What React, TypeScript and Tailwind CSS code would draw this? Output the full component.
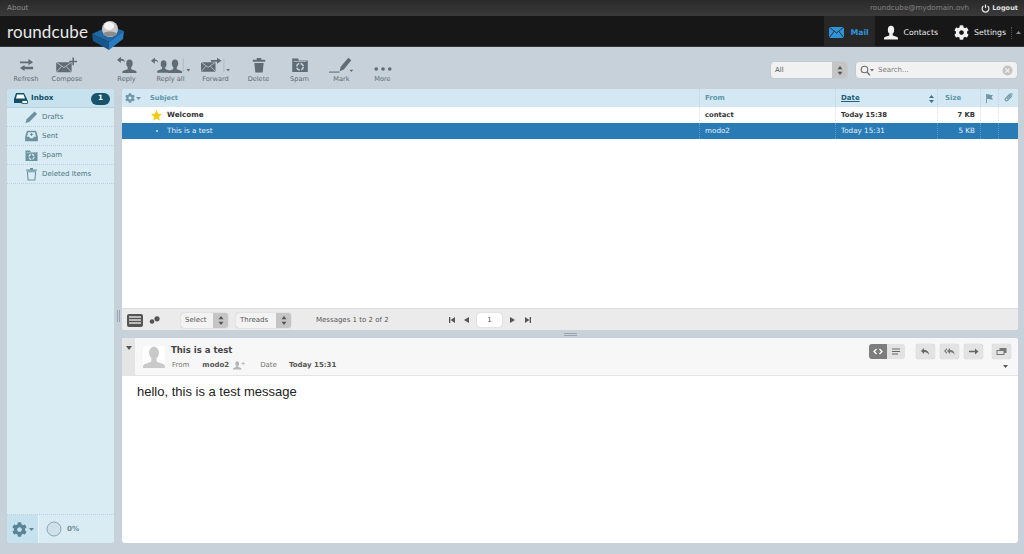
import { FaCog } from 'react-icons/fa';

const toolIcon = '#5f6c75';

function Person({ x = 0, y = 0, s = 1, fill = toolIcon }: { x?: number; y?: number; s?: number; fill?: string }) {
  return (
    <g transform={`translate(${x} ${y}) scale(${s})`} fill={fill}>
      <ellipse cx="8" cy="5" rx="3.6" ry="4.6" />
      <path d="M6 9h4v2.4l5 1.8c.8.3 1 1 1 2.8H0c0-1.8.2-2.500 1-2.800l5-1.800z" />
    </g>
  );
}

function Envelope({ x = 0, y = 0, w = 20, fill = toolIcon }: { x?: number; y?: number; w?: number; fill?: string }) {
  const s = w / 20;
  return (
    <g transform={`translate(${x} ${y}) scale(${s})`}>
      <rect width="20" height="13" fill={fill} rx="0.5" />
      <path d="M0 0l10 7 10-7M0 13l7-7.5M20 13l-7-7.5" fill="none" stroke="#c7d1da" strokeWidth="1" />
    </g>
  );
}

function RecycleFolder({ color = toolIcon, bg = '#c7d1da' }: { color?: string; bg?: string }) {
  return (
    <>
      <path d="M2 3h6l1 2h9v12H2z" fill={color} />
      <path d="M3.5 6h13" stroke={bg} strokeWidth="0.8" />
      <circle cx="10" cy="11.500" r="3.400" fill="none" stroke={bg} strokeWidth="1.600" strokeDasharray="4 1.400" />
    </>
  );
}

function ToolButton({ label, width, vw, children }: { label: string; width: string; vw: number; children: React.ReactNode }) {
  return (
    <div className={`${width} flex flex-col items-center`}>
      <svg width={Math.round(vw * 0.77)} height="17" viewBox={`0 0 ${vw} 22`}>{children}</svg>
      <span className="mt-[1px] text-[6.6px] leading-[10px] text-[#5c6b74]">{label}</span>
    </div>
  );
}

function Caret({ x, y, color = toolIcon }: { x: number; y: number; color?: string }) {
  return <path d={`M${x} ${y}h5l-2.5 3z`} fill={color} />;
}

function Toolbar() {
  return (
    <div className="flex h-[42px] items-start pl-[6px] pr-[7px] pt-[9px]">
      <ToolButton label="Refresh" width="w-[40px]" vw={19}>
        <path d="M1 8h11V5l6 4-6 4v-2.500H1zM18 15H7v-2.500l-6 4 6 4V18h11z" fill={toolIcon} transform="translate(0 -1)" />
      </ToolButton>
      <ToolButton label="Compose" width="w-[42px]" vw={28}>
        <Envelope x={0} y={8} />
        <path d="M21 2h2v4h4v2h-4v4h-2V8h-4V6h4z" fill={toolIcon} />
      </ToolButton>
      <div className="w-[18px]" />
      <ToolButton label="Reply" width="w-[41px]" vw={26}>
        <Person x={7} y={4} s={1.15} />
        <path d="M0 5l5-4v2.600c3 0 5 1.500 5.500 4.400-1.500-1.500-3-2-5.500-2V9z" fill={toolIcon} />
      </ToolButton>
      <ToolButton label="Reply all" width="w-[47px]" vw={52}>
        <Person x={8} y={5} s={1.05} />
        <Person x={22} y={4} s={1.15} />
        <path d="M0 6l5-4v2.600c2.500 0 4 1.500 4.500 4-1.500-1.500-2.500-2-4.500-2V10z" fill={toolIcon} />
        <path d="M42 3v18" stroke="#9aa5ad" strokeWidth="0.7" />
        <Caret x={46} y={17} />
      </ToolButton>
      <ToolButton label="Forward" width="w-[43px]" vw={38}>
        <Envelope x={0} y={8} w={19} />
        <path d="M13 5h8V2l6 4-6 4V7.500h-8z" fill={toolIcon} />
        <path d="M30 3v18" stroke="#9aa5ad" strokeWidth="0.7" />
        <Caret x={33} y={17} />
      </ToolButton>
      <ToolButton label="Delete" width="w-[43px]" vw={18}>
        <path d="M1 5h16v2.500H1zM6 2.500h6V5H6z" fill={toolIcon} />
        <path d="M3 9h12l-1.200 12.500H4.200z" fill={toolIcon} />
      </ToolButton>
      <ToolButton label="Spam" width="w-[39px]" vw={24}>
        <g transform="translate(-1 -1) scale(1.3)"><RecycleFolder /></g>
      </ToolButton>
      <ToolButton label="Mark" width="w-[45px]" vw={33}>
        <path d="M0 21h14" stroke={toolIcon} strokeWidth="1.400" />
        <path d="M14 20l1.500-6 10-12 4 3.500-10 12z" fill={toolIcon} />
        <Caret x={27} y={18} />
      </ToolButton>
      <ToolButton label="More" width="w-[37px]" vw={24}>
        <circle cx="3" cy="17" r="2.400" fill={toolIcon} />
        <circle cx="12" cy="17" r="2.400" fill={toolIcon} />
        <circle cx="21" cy="17" r="2.400" fill={toolIcon} />
      </ToolButton>
      <div className="flex-1" />
      <div className="mt-[6px] flex h-[16px] w-[76px] rounded-[3px] bg-[#f1f1f1] shadow-[0_0_1px_#9aa5ad]">
        <span className="flex-1 pl-[4px] text-[7px] leading-[16px] text-[#555]">All</span>
        <div className="flex w-[15px] items-center justify-center rounded-r-[3px] bg-[#c5c5c5]">
          <svg width="6" height="9" viewBox="0 0 6 9"><path d="M3 0l2.500 3.200h-5zM3 9L.5 5.800h5z" fill="#555" /></svg>
        </div>
      </div>
      <div className="ml-[9px] mt-[6px] flex h-[16px] w-[161px] items-center rounded-[3px] bg-[#f1f1f1] px-[4px] shadow-[0_0_1px_#9aa5ad]">
        <svg width="14" height="11" viewBox="0 0 14 11">
          <circle cx="4.500" cy="4.500" r="3.300" fill="none" stroke="#6d6d6d" strokeWidth="1.100" />
          <path d="M7 7l3 3.400" stroke="#6d6d6d" strokeWidth="1.400" />
          <path d="M10 4h4l-2 2.500z" fill="#6d6d6d" />
        </svg>
        <span className="ml-[4px] flex-1 text-[7px] text-[#7b7b7b]">Search...</span>
        <svg width="11" height="11" viewBox="0 0 11 11">
          <circle cx="5.500" cy="5.500" r="5" fill="#c4c4c4" />
          <path d="M3.400 3.400l4.200 4.200M7.600 3.400L3.400 7.600" stroke="#f1f1f1" strokeWidth="1.200" />
        </svg>
      </div>
    </div>
  );
}

function Header() {
  return (
    <>
      <div className="flex h-[16px] items-center justify-between bg-gradient-to-b from-[#2a2a2a] to-[#3a3a3a] pl-[7px] pr-[6px] pt-[1px] text-[7.2px]">
        <span className="text-[#8d8d8d]">About</span>
        <div className="flex items-center">
          <span className="text-[#848484]">roundcube@mydomain.ovh</span>
          <svg className="ml-[12px]" width="9" height="9" viewBox="0 0 9 9" fill="none" stroke="#e6e6e6" strokeWidth="1.200">
            <path d="M2.400 2a3.400 3.400 0 1 0 4.200 0M4.500 .5v3.600" />
          </svg>
          <span className="ml-[2px] text-[6.6px] font-bold text-[#e0e0e0]">Logout</span>
        </div>
      </div>
      <div className="flex h-[31px] items-center justify-between border-b border-[#333] bg-[#171717]">
        <div className="flex items-center pl-[7px]">
          <span className="font-['Lato',sans-serif] text-[17px] leading-[31px] tracking-[0.1px] text-[#e8e8e8]">roundcube</span>
          <svg className="ml-[3px] mt-[4px] -mb-[3px] overflow-visible" width="34" height="31" viewBox="0 0 34 31">
            <path d="M1 15l17-8 15 5-15 11z" fill="#1f6aa6" />
            <path d="M1 15l17 8v8L2 22z" fill="#17558a" />
            <path d="M18 23l15-11-1 8-14 11z" fill="#2a7cc0" />
            <ellipse cx="19" cy="10" rx="8" ry="8" fill="#c9c9c9" />
            <ellipse cx="18" cy="7" rx="5" ry="4" fill="#f4f4f4" />
            <ellipse cx="19" cy="15" rx="7" ry="2.500" fill="#8d8d8d" />
          </svg>
        </div>
        <div className="flex h-full items-center text-[7.8px]">
          <div className="flex h-full w-[51px] items-center justify-center gap-[6px] bg-[#272727] pt-[3px] font-bold text-[#2f93da]">
            <svg width="15" height="11" viewBox="0 0 15 11">
              <rect width="15" height="11" fill="#2f93da" />
              <path d="M0 0l7.500 6L15 0M0 11l5-6.500M15 11l-5-6.500" stroke="#272727" strokeWidth="0.9" fill="none" />
            </svg>
            Mail
          </div>
          <div className="ml-[9px] flex items-center gap-[6px] pt-[3px] text-[#eeeeee]">
            <svg width="14" height="15" viewBox="0 0 16 16"><Person fill="#f2f2f2" /></svg>
            Contacts
          </div>
          <div className="ml-[16px] flex items-center gap-[5px] pt-[3px] text-[#eeeeee]">
            <FaCog className="text-[15px] text-[#f2f2f2]" />
            Settings
          </div>
          <div className="ml-[5px] mt-[3px] h-[12px] border-l border-dotted border-[#555]" />
          <svg className="ml-[4px] mr-[3px] mt-[3px]" width="5" height="3" viewBox="0 0 5 3"><path d="M2.500 0L5 3H0z" fill="#8a8a8a" /></svg>
        </div>
      </div>
    </>
  );
}

const sidebarColor = '#6c929f';

function FolderRow({ label, children }: { label: string; children: React.ReactNode }) {
  return (
    <div className="flex h-[19px] items-center border-b border-dotted border-[#b9d0da] pl-[17px] text-[7px] text-[#4d7683]">
      <svg className="shrink-0" width="15" height="14" viewBox="0 0 20 18">{children}</svg>
      <span className="ml-[3px]">{label}</span>
    </div>
  );
}

function Sidebar() {
  return (
    <div className="flex w-[107px] shrink-0 flex-col overflow-hidden rounded-[3px] bg-[#d9ecf4]">
      <div className="flex h-[19px] items-center border-b border-[#b9d0da] bg-[#c5e2ee] pl-[6px] pr-[4px] pt-[1px] text-[7.2px] font-bold text-[#134f63]">
        <svg width="15" height="13" viewBox="0 0 15 13">
          <path d="M3 1h8l3 6v4H1V7z" fill="#134f63" />
          <path d="M4 2.500h6.500L12 6.500H3z" fill="#fff" />
          <rect x="9" y="8.500" width="5.500" height="3" fill="#fff" stroke="#134f63" strokeWidth="0.8" />
        </svg>
        <span className="ml-[3px] flex-1">Inbox</span>
        <span className="flex h-[12px] w-[19px] items-center justify-center rounded-[6px] bg-[#17536a] text-white">1</span>
      </div>
      <FolderRow label="Drafts">
        <path d="M2 17l1.500-5L14 1.500l3.500 3.500L7 15.500z" fill={sidebarColor} />
      </FolderRow>
      <FolderRow label="Sent">
        <path d="M4 2h12l2.500 8v6H1.500v-6z" fill={sidebarColor} />
        <path d="M5.500 4h9l1.500 6h-3l-1 2H8l-1-2H4z" fill="#d9ecf4" />
        <path d="M10 5v4M8 7h4" stroke={sidebarColor} strokeWidth="1.400" />
      </FolderRow>
      <FolderRow label="Spam">
        <RecycleFolder color={sidebarColor} bg="#d9ecf4" />
      </FolderRow>
      <FolderRow label="Deleted Items">
        <path d="M3 3h14v1.500H3zM8 1h4v2H8z" fill={sidebarColor} />
        <path d="M4.500 6h11l-1 11h-9z" fill="none" stroke={sidebarColor} strokeWidth="1.500" />
      </FolderRow>
      <div className="flex-1" />
      <div className="flex h-[29px] items-center border-t border-dotted border-[#b9d0da]">
        <div className="flex h-full w-[32px] items-center justify-center gap-[2px] border-r border-[#e6f3f8] bg-[#c5e2ee]">
          <FaCog className="text-[15px] text-[#5a8594]" />
          <svg width="5" height="3" viewBox="0 0 5 3"><path d="M0 0h5L2.500 3z" fill="#5a8594" /></svg>
        </div>
        <svg className="ml-[7px] -mt-[1px]" width="16" height="16" viewBox="0 0 16 16">
          <circle cx="8" cy="8" r="7" fill="#d0e2e9" stroke="#7f9fab" strokeWidth="0.9" />
        </svg>
        <span className="ml-[5px] text-[7.2px] font-bold text-[#6c8c98]">0%</span>
      </div>
    </div>
  );
}

const cols = 'grid grid-cols-[578px_136px_102px_43px_18px_1fr]';

function MessageRow({ subject, from, date, size, selected }: { subject: string; from: string; date: string; size: string; selected?: boolean }) {
  const border = selected ? 'border-r border-dotted border-[#5c9ac9]' : 'border-r border-dotted border-[#e3e3e3]';
  const meta = selected ? 'text-[7.2px]' : 'text-[6.8px] font-bold';
  return (
    <div className={`${cols} h-[16px] items-center text-[7.2px] leading-[16px] ${selected ? 'bg-[#297bb6] text-[#e8f2f8]' : 'bg-white font-bold text-[#333]'}`}>
      <div className={`${border} flex h-full items-center pl-[29px]`}>
        <span className="flex w-[16px] justify-start">
          {selected ? (
            <span className="ml-[5px] h-[2px] w-[2px] rounded-full bg-[#cfe3f0]" />
          ) : (
            <svg width="11" height="11" viewBox="0 0 11 11"><path d="M5.500 0l1.600 3.700 3.900.4-3 2.600.9 4-3.400-2.100-3.400 2.100.9-4-3-2.600 3.900-.4z" fill="#f2cb10" /></svg>
          )}
        </span>
        {subject}
      </div>
      <div className={`${border} ${meta} h-full pl-[5px]`}>{from}</div>
      <div className={`${border} ${meta} h-full pl-[5px]`}>{date}</div>
      <div className={`${border} ${meta} h-full pr-[5px] text-right`}>{size}</div>
      <div className={`${border} h-full`} />
      <div className="h-full" />
    </div>
  );
}

function MessageList() {
  return (
    <div className="flex h-[241px] flex-col overflow-hidden rounded-[3px] bg-white">
      <div className={`${cols} h-[18px] items-center bg-[#d3e8f2] text-[7px] font-bold text-[#5d97a9]`}>
        <div className="flex h-full items-center border-r border-dotted border-[#bcd6e1] pl-[3px]">
          <FaCog className="text-[10px] text-[#6f97a5]" />
          <svg className="ml-[1px]" width="5" height="3" viewBox="0 0 5 3"><path d="M0 0h5L2.500 3z" fill="#6f97a5" /></svg>
          <span className="ml-[9px] pt-[1px] text-[6.6px]">Subject</span>
        </div>
        <div className="flex h-full items-center border-r border-dotted border-[#bcd6e1] pl-[5px] pt-[1px]">From</div>
        <div className="flex h-full items-center justify-between border-r border-dotted border-[#bcd6e1] pl-[5px] pr-[3px] pt-[1px]">
          <span className="text-[#1d6079] underline">Date</span>
          <svg width="5" height="8" viewBox="0 0 5 8"><path d="M2.500 0L5 3H0zM2.500 8L0 5h5z" fill="#3d7389" /></svg>
        </div>
        <div className="flex h-full items-center border-r border-dotted border-[#bcd6e1] pl-[7px] pt-[1px]">Size</div>
        <div className="flex h-full items-center justify-center border-r border-dotted border-[#bcd6e1]">
          <svg width="9" height="9" viewBox="0 0 9 9"><path d="M1 0h.9v9H1zM2 .5c2-.8 3 1 6 .5L6.500 3 8 5.500c-3 .5-4-1-6-.5z" fill="#6f97a5" /></svg>
        </div>
        <div className="flex h-full items-center justify-center">
          <svg width="10" height="10" viewBox="0 0 10 10" fill="none" stroke="#6f97a5" strokeWidth="1.100">
            <path d="M8.500 1.500c-1-1-2.200-.8-3 0L1.600 5.400c-1.300 1.400.6 3.200 2 2l3.700-3.800c.7-.8-.3-1.700-1-1L3 5.800" />
          </svg>
        </div>
      </div>
      <MessageRow subject="Welcome" from="contact" date="Today 15:38" size="7 KB" />
      <MessageRow subject="This is a test" from="modo2" date="Today 15:31" size="5 KB" selected />
      <div className="flex-1" />
      <div className="flex h-[22px] items-center border-t border-[#dedede] bg-[#ebebeb] pl-[5px] pt-[1px] text-[7px] text-[#555]">
        <div className="flex h-[13px] w-[16px] flex-col justify-center gap-[1px] rounded-[2px] bg-[#555] px-[2px]">
          <span className="h-[2px] bg-[#bbb]" />
          <span className="h-[2px] bg-[#bbb]" />
          <span className="h-[2px] bg-[#bbb]" />
        </div>
        <svg className="ml-[6px]" width="11" height="8" viewBox="0 0 11 8">
          <circle cx="3" cy="5.500" r="2.300" fill="#555" />
          <circle cx="8" cy="2.800" r="2.600" fill="#555" />
        </svg>
        <MiniSelect label="Select" width="w-[47px]" className="ml-[21px]" />
        <MiniSelect label="Threads" width="w-[55px]" className="ml-[8px]" />
        <span className="ml-[25px] w-[133px]">Messages 1 to 2 of 2</span>
        <PageArrows />
      </div>
    </div>
  );
}

function MiniSelect({ label, width, className }: { label: string; width: string; className: string }) {
  return (
    <div className={`${width} ${className} flex h-[15px] rounded-[3px] bg-[#f3f3f3] shadow-[0_0_1px_#999]`}>
      <span className="flex-1 pl-[4px] leading-[15px]">{label}</span>
      <div className="flex w-[15px] items-center justify-center rounded-r-[3px] bg-[#c5c5c5]">
        <svg width="6" height="9" viewBox="0 0 6 9"><path d="M3 0l2.500 3.200h-5zM3 9L.5 5.800h5z" fill="#555" /></svg>
      </div>
    </div>
  );
}

function PageArrows() {
  return (
    <div className="flex items-center">
      <svg width="6" height="6" viewBox="0 0 6 6"><path d="M0 0h1.300v6H0zM6 0v6L1.600 3z" fill="#555" /></svg>
      <svg className="ml-[9px]" width="5" height="6" viewBox="0 0 5 6"><path d="M5 0v6L0 3z" fill="#555" /></svg>
      <span className="ml-[8px] flex h-[14px] w-[25px] items-center justify-center rounded-[3px] bg-white shadow-[0_0_1px_#999]">1</span>
      <svg className="ml-[8px]" width="5" height="6" viewBox="0 0 5 6"><path d="M0 0v6l5-3z" fill="#555" /></svg>
      <svg className="ml-[10px]" width="6" height="6" viewBox="0 0 6 6"><path d="M6 0H4.700v6H6zM0 0v6l4.400-3z" fill="#555" /></svg>
    </div>
  );
}

function PreviewButton({ children }: { children: React.ReactNode }) {
  return (
    <div className="flex h-[15px] w-[19px] items-center justify-center rounded-[3px] bg-[#e3e3e3] shadow-[0_0_1px_#aaa]">
      <svg width="11" height="9" viewBox="0 0 11 9">{children}</svg>
    </div>
  );
}

function Preview() {
  return (
    <div className="flex-1 overflow-hidden rounded-[3px] bg-white">
      <div className="flex h-[38px] border-b border-[#e4e4e4] bg-[#f7f7f7]">
        <div className="w-[13px] bg-[#e5e5e5] pl-[4px] pt-[8px]">
          <svg width="6" height="4" viewBox="0 0 6 4"><path d="M0 0h6L3 4z" fill="#555" /></svg>
        </div>
        <div className="ml-[8px] mt-[8px] h-[22px] w-[22px] rounded-[2px] bg-white">
          <svg width="22" height="22" viewBox="0 0 16 16"><Person fill="#c9c9c9" /></svg>
        </div>
        <div className="ml-[6px] mt-[6px] flex-1">
          <div className="text-[8.5px] font-bold leading-[12px] text-[#444]">This is a test</div>
          <div className="mt-[4px] flex items-center text-[7px] leading-[11px] text-[#777]">
            <span className="ml-[1px]">From</span>
            <span className="ml-[13px] font-bold text-[#555]">modo2</span>
            <svg className="ml-[4px]" width="12" height="9" viewBox="0 0 16 12"><g transform="scale(0.7)"><Person fill="#b5b5b5" /></g><path d="M13 1h1v2h2v1h-2v2h-1V4h-2V3h2z" fill="#b5b5b5" /></svg>
            <span className="ml-[15px]">Date</span>
            <span className="ml-[12px] font-bold text-[#555]">Today 15:31</span>
          </div>
        </div>
        <div className="flex flex-col items-end pr-[7px] pt-[6px]">
          <div className="flex">
            <div className="flex h-[15px] w-[18px] items-center justify-center rounded-l-[3px] bg-[#7d7d7d]">
              <svg width="10" height="7" viewBox="0 0 10 7" fill="none" stroke="#fff" strokeWidth="1.300"><path d="M3.500 1L1 3.500 3.500 6M6.500 1L9 3.500 6.500 6" /></svg>
            </div>
            <div className="flex h-[15px] w-[18px] items-center justify-center rounded-r-[3px] bg-[#e3e3e3]">
              <svg width="10" height="7" viewBox="0 0 10 7" stroke="#666" strokeWidth="1"><path d="M1 1h8M1 3.500h8M1 6h6" /></svg>
            </div>
            <div className="w-[11px]" />
            <PreviewButton><path d="M4 1L1 4l3 3V5c2.500 0 4 .7 5 3 0-3.500-2-5-5-5z" fill="#666" /></PreviewButton>
            <div className="w-[5px]" />
            <PreviewButton><path d="M3 1L0 4l3 3V5.500L1.500 4 3 2.500zM6 1L3 4l3 3V5c2 0 3.500.7 4.500 3 0-3.500-1.500-5-4.500-5z" fill="#777" /></PreviewButton>
            <div className="w-[5px]" />
            <PreviewButton><path d="M1 3.700h6V1.500L10.500 4.500 7 7.500V5.300H1z" fill="#666" /></PreviewButton>
            <div className="w-[9px]" />
            <PreviewButton><path d="M3.500 1h7v5h-2v2h-8V3h3z M1.500 4v3h6V4z" fill="#777" fillRule="evenodd" /></PreviewButton>
          </div>
          <svg className="mr-[3px] mt-[6px]" width="5" height="3" viewBox="0 0 5 3"><path d="M0 0h5L2.500 3z" fill="#555" /></svg>
        </div>
      </div>
      <p className="pl-[15px] pt-[8px] font-['Liberation_Sans',sans-serif] text-[13px] leading-[16px] text-[#222]">hello, this is a test message</p>
    </div>
  );
}

export default function App() {
  return (
    <div className="flex h-[554px] w-[1024px] flex-col overflow-hidden bg-[#c7d1da] font-['DejaVu_Sans',sans-serif]">
      <Header />
      <Toolbar />
      <div className="flex min-h-0 flex-1 pb-[11px] pl-[7px] pr-[6px]">
        <Sidebar />
        <div className="flex w-[8px] shrink-0 justify-center gap-[1px] pt-[221px]">
          <span className="h-[12px] w-[1px] bg-[#98a5ae]" />
          <span className="h-[12px] w-[1px] bg-[#98a5ae]" />
        </div>
        <div className="flex min-w-0 flex-1 flex-col">
          <MessageList />
          <div className="flex h-[8px] shrink-0 flex-col items-center justify-center gap-[1px]">
            <span className="h-[1px] w-[13px] bg-[#98a5ae]" />
            <span className="h-[1px] w-[13px] bg-[#98a5ae]" />
          </div>
          <Preview />
        </div>
      </div>
    </div>
  );
}
